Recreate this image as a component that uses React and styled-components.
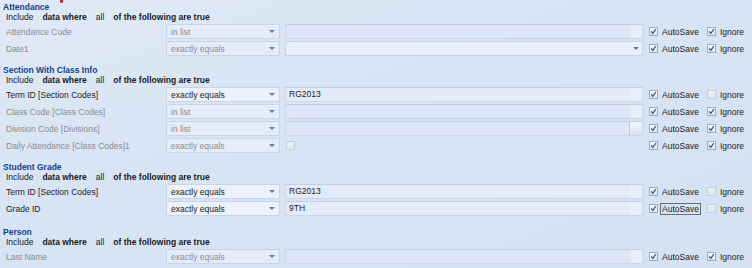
import React from 'react';
import styled, { createGlobalStyle } from 'styled-components';

const GlobalStyle = createGlobalStyle`
	html, body {
		margin: 0;
		padding: 0;
		background: #d6e3f4;
	}
	body {
		font-family: "Liberation Sans", Arial, sans-serif;
		font-size: 8.5px;
		color: #222;
	}
`

const Page = styled.div`
	position: relative;
	width: 752px;
	height: 268px;
	overflow: hidden;
	box-sizing: border-box;
	padding-top: 2px;
	background: linear-gradient(160deg, #e0e9f6 0%, #d7e4f4 45%, #d3e1f3 100%);
`

const RedMark = styled.div`
	position: absolute;
	left: 60px;
	top: 0;
	width: 3px;
	height: 3px;
	background: #d81c1c;
	border-radius: 0 0 2px 2px;
`

const Section = styled.div`
	margin-top: ${({gap}) => gap}px;
`

const SectionTitle = styled.div`
	height: 10px;
	line-height: 10px;
	padding-left: 3px;
	font-weight: bold;
	color: #15428b;
`

const IncludeLine = styled.div`
	display: flex;
	gap: 9px;
	height: 10px;
	line-height: 10px;
	padding-left: 6px;
	color: #1a1a1a;
`

const Strong = styled.span`
	font-weight: bold;
`

const Rows = styled.div`
	margin-top: 1px;
`

const Row = styled.div`
	display: flex;
	align-items: center;
	height: 17px;
	padding-left: 6px;
`

const FieldLabel = styled.div`
	width: 160px;
	color: ${({disabled}) => disabled ? '#8c8c8c' : '#222'};
	white-space: nowrap;
`

const Combo = styled.div`
	display: flex;
	align-items: center;
	box-sizing: border-box;
	width: ${({w}) => w}px;
	height: 15px;
	padding: 0 3px 0 4px;
	border: 1px solid #c5d5ea;
	background: ${({disabled}) => disabled ? '#e4ecf8' : '#edf2fa'};
	color: ${({disabled}) => disabled ? '#8c8c8c' : '#222'};
`

const ComboText = styled.span`
	flex: 1;
	white-space: nowrap;
`

const Arrow = styled.span`
	width: 0;
	height: 0;
	border-left: 3px solid transparent;
	border-right: 3px solid transparent;
	border-top: 3px solid #5b7fb6;
	margin-right: 1px;
`

const ValueBox = styled.div`
	display: flex;
	align-items: stretch;
	box-sizing: border-box;
	width: 358px;
	height: 15px;
	margin-left: 5px;
	border: 1px solid #c8d7ea;
	border-top-color: #bfcfe6;
	background: ${({disabled}) => disabled ? '#dce6f4' : '#e2ebf7'};
	color: #222;
`

const ValueText = styled.div`
	flex: 1;
	line-height: 13px;
	padding-left: 3px;
`

const ValueSide = styled.div`
	width: 12px;
	background: ${({button}) => button
		? 'linear-gradient(#f4f7fc, #d9e3f1)'
		: '#e9eff9'};
	border-left: ${({button}) => button ? '1px solid #b9cbe3' : 'none'};
`

const ValueCombo = styled(Combo)`
	margin-left: 5px;
	padding-right: 2px;
	background: #e9f0f9;
`

const CheckSlot = styled.div`
	width: 358px;
	margin-left: 5px;
	display: flex;
	align-items: center;
	padding-left: 1px;
`

const Options = styled.div`
	display: flex;
	align-items: center;
	margin-left: 6px;
`

const CheckOption = styled.label`
	display: flex;
	align-items: center;
	gap: 3px;
	width: ${({w}) => w}px;
	color: #222;
`

const Box = styled.span`
	position: relative;
	display: inline-block;
	box-sizing: border-box;
	width: 9px;
	height: 9px;
	border: 1px solid ${({faded}) => faded ? '#c3cedd' : '#9badc6'};
	background: ${({faded}) => faded
		? 'linear-gradient(#eef2f7, #e1e7ef)'
		: 'linear-gradient(#f6f8fc, #dfe7f2)'};
`

const OptionText = styled.span`
	padding: 0 1px;
	line-height: 10px;
	outline: ${({focus}) => focus ? '1px solid #6d6d6d' : 'none'};
	outline-offset: 0;
`

const Check = () => (
	<svg width="7" height="7" viewBox="0 0 7 7" style={{position: 'absolute', left: 0, top: 0}}>
		<path d="M1.2 3.4 L2.8 5.4 L5.8 1.2" fill="none" stroke="#35589a" strokeWidth="1.2" />
	</svg>
)

const CheckBox = ({checked, faded}) => (
	<Box faded={faded}>{checked && <Check />}</Box>
)

const sections = [
	{
		title: 'Attendance',
		gap: 0,
		rows: [
			{label: 'Attendance Code', op: 'in list', disabled: true, value: {type: 'text'}, auto: true, ignore: true},
			{label: 'Date1', op: 'exactly equals', disabled: true, value: {type: 'combo'}, auto: true, ignore: true},
		],
	},
	{
		title: 'Section With Class Info',
		gap: 8,
		rows: [
			{label: 'Term ID [Section Codes]', op: 'exactly equals', value: {type: 'text', text: 'RG2013'}, auto: true, ignore: false},
			{label: 'Class Code [Class Codes]', op: 'in list', disabled: true, value: {type: 'text'}, auto: true, ignore: true},
			{label: 'Division Code [Divisions]', op: 'in list', disabled: true, value: {type: 'text', button: true}, auto: true, ignore: true},
			{label: 'Daily Attendance [Class Codes]1', op: 'exactly equals', disabled: true, value: {type: 'check'}, auto: true, ignore: true},
		],
	},
	{
		title: 'Student Grade',
		gap: 8,
		rows: [
			{label: 'Term ID [Section Codes]', op: 'exactly equals', value: {type: 'text', text: 'RG2013'}, auto: true, ignore: false},
			{label: 'Grade ID', op: 'exactly equals', value: {type: 'text', text: '9TH'}, auto: true, ignore: false, focus: true},
		],
	},
	{
		title: 'Person',
		gap: 10,
		rows: [
			{label: 'Last Name', op: 'exactly equals', disabled: true, value: {type: 'text'}, auto: true, ignore: true},
		],
	},
];

const Value = ({value, disabled}) => {
	if (value.type === 'combo') {
		return (
			<ValueCombo w={358} disabled={disabled}>
				<ComboText />
				<Arrow />
			</ValueCombo>
		);
	}
	if (value.type === 'check') {
		return (
			<CheckSlot>
				<CheckBox faded />
			</CheckSlot>
		);
	}
	return (
		<ValueBox disabled={disabled}>
			<ValueText>{value.text}</ValueText>
			<ValueSide button={value.button} />
		</ValueBox>
	);
};

const FilterRow = ({row}) => (
	<Row>
		<FieldLabel disabled={row.disabled}>{row.label}</FieldLabel>
		<Combo w={114} disabled={row.disabled}>
			<ComboText>{row.op}</ComboText>
			<Arrow />
		</Combo>
		<Value value={row.value} disabled={row.disabled} />
		<Options>
			<CheckOption w={58}>
				<CheckBox checked={row.auto} />
				<OptionText focus={row.focus}>AutoSave</OptionText>
			</CheckOption>
			<CheckOption w={45}>
				<CheckBox checked={row.ignore} faded={!row.ignore} />
				<OptionText>Ignore</OptionText>
			</CheckOption>
		</Options>
	</Row>
);

const App = () => {
	return (
		<Page>
			<GlobalStyle />
			<RedMark />
			{sections.map((section) => (
				<Section key={section.title} gap={section.gap}>
					<SectionTitle>{section.title}</SectionTitle>
					<IncludeLine>
						<span>Include</span>
						<Strong>data where</Strong>
						<span>all</span>
						<Strong>of the following are true</Strong>
					</IncludeLine>
					<Rows>
						{section.rows.map((row, j) => (
							<FilterRow key={j} row={row} />
						))}
					</Rows>
				</Section>
			))}
		</Page>
	);
};

export default App;
